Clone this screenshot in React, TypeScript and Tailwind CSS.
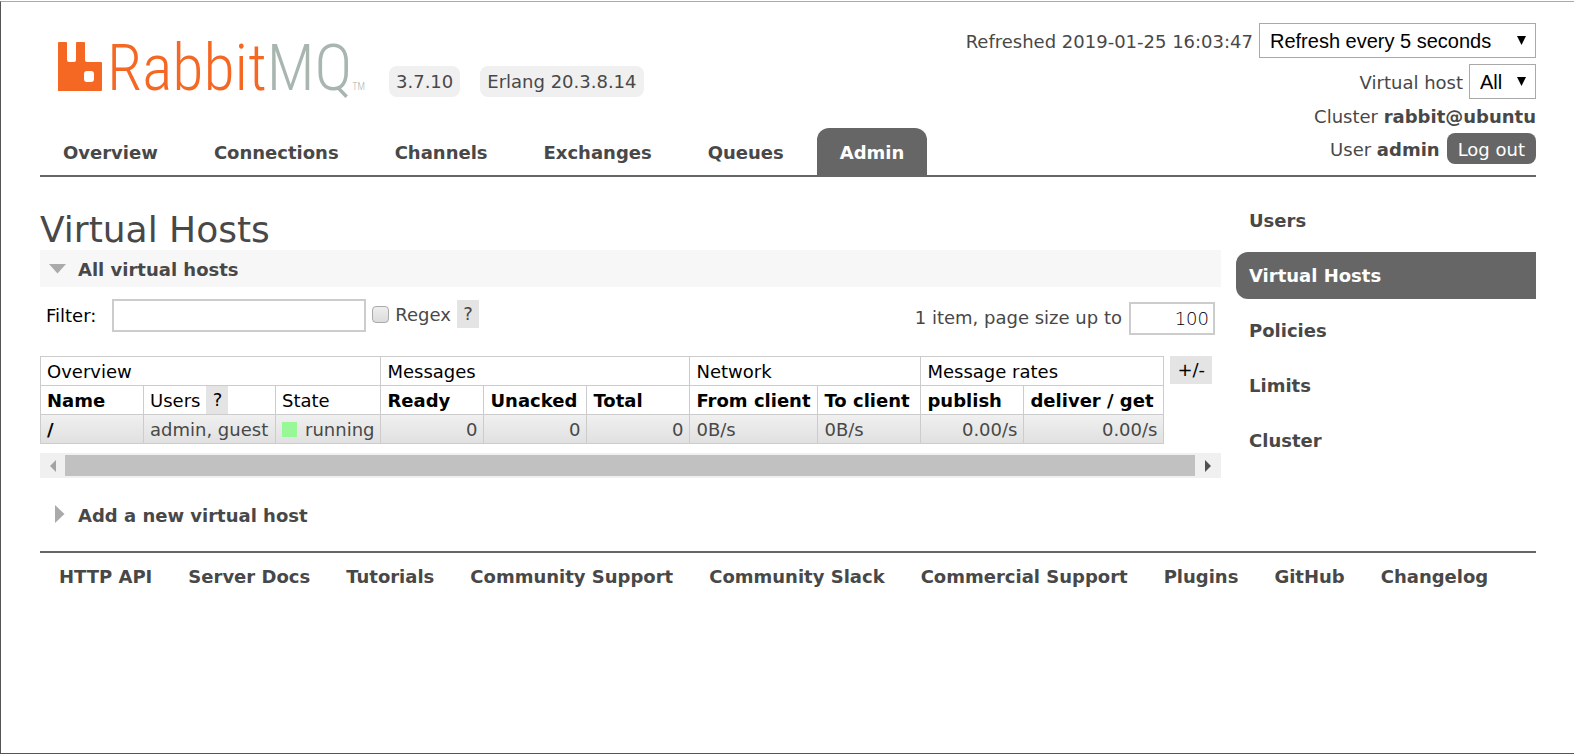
import React from "react";

const navItems = ["Overview", "Connections", "Channels", "Exchanges", "Queues", "Admin"];
const sideItems = ["Users", "Virtual Hosts", "Policies", "Limits", "Cluster"];
const footerLinks = [
  "HTTP API",
  "Server Docs",
  "Tutorials",
  "Community Support",
  "Community Slack",
  "Commercial Support",
  "Plugins",
  "GitHub",
  "Changelog",
];

function Logo() {
  return (
    <a href="#" aria-label="RabbitMQ" className="flex h-[58px] w-[305px] items-end">
      <svg width="45" height="50" viewBox="0 0 45 50" className="mb-[6px] shrink-0" aria-hidden="true">
        <path
          fill="#f56823"
          fillRule="evenodd"
          d="M1 1h7q1 0 1 1v17q0 2 2 2h5q2 0 2-2V2q0-1 1-1h7q1 0 1 1v17q0 2 2 2h14q1 0 1 1v27q0 1-1 1H0V2q0-1 1-1zM29 30q-3 0-3 3v5q0 3 3 3h4q3 0 3-3v-5q0-3-3-3z"
        />
      </svg>
      <span className="ml-[4px] font-['Roboto_Condensed',sans-serif] text-[64px] leading-[56px] font-light text-[#f56823]">
        Rabbit<span className="text-[#a9b6b0]">MQ</span>
      </span>
      <span className="pb-[3px] font-['Roboto_Condensed',sans-serif] text-[10px] leading-[14px] font-light text-[#a9b6b0]">
        TM
      </span>
    </a>
  );
}

function SelectBox({ id, label, value, className }: { id: string; label: React.ReactNode; value: string; className: string }) {
  return (
    <div className="flex items-center justify-end gap-[6px]">
      <label htmlFor={id} className="pt-[2px]">{label}</label>
      <span className={"relative flex " + className}>
        <select
          id={id}
          className="h-[35px] w-full appearance-none border border-[#a9a9a9] bg-white pl-[10px] font-['Liberation_Sans',Arial,sans-serif] text-[20px] text-black"
        >
          <option>{value}</option>
        </select>
        <svg width="9" height="9" viewBox="0 0 9 9" className="pointer-events-none absolute top-[13px] right-[10px]" aria-hidden="true">
          <path d="M0 0h9L4.500 9z" fill="#000" />
        </svg>
      </span>
    </div>
  );
}

function Help() {
  return (
    <button type="button" aria-label="Help" className="h-[28px] w-[22px] bg-[#e4e4e4] text-center">
      ?
    </button>
  );
}

const th = "border border-[#ccc] px-[6px] pt-px leading-[27px] text-left whitespace-nowrap";
const num = "border border-[#ccc] px-[6px] pt-px leading-[27px] text-right";

export default function App() {
  return (
    <div className="pt-px">
      <div className="min-h-[calc(100vh-1px)] border-t border-b border-l border-t-[#aaa] border-b-[#555] border-l-[#555] bg-white pr-[38px] pl-[39px] font-['DejaVu_Sans',Verdana,sans-serif] text-[18px] leading-[28px] text-[#484848]">
        <header className="flex justify-between border-b-2 border-[#666]">
          <div className="flex flex-col justify-between">
            <div className="flex items-end pt-[37px] pl-[18px]">
              <Logo />
              <div className="ml-[26px] flex gap-[20px]">
                <span className="rounded-[8px] bg-[#f0f0f0] px-[7px] pt-[2px] pb-px leading-[28px]">3.7.10</span>
                <span className="rounded-[8px] bg-[#f0f0f0] px-[7px] pt-[2px] pb-px leading-[28px]">Erlang 20.3.8.14</span>
              </div>
            </div>
            <nav className="flex gap-[10px] font-bold">
              {navItems.map((item) => (
                <a
                  key={item}
                  href="#"
                  className={
                    item === "Admin"
                      ? "rounded-t-[12px] bg-[#666] px-[23px] pt-[11px] pb-[8px] text-white"
                      : "px-[23px] pt-[11px] pb-[8px]"
                  }
                >
                  {item}
                </a>
              ))}
            </nav>
          </div>
          <div className="flex flex-col items-end pt-[21px] pb-[11px]">
            <SelectBox id="refresh" label="Refreshed 2019-01-25 16:03:47" value="Refresh every 5 seconds" className="w-[277px]" />
            <div className="pt-[6px]">
              <SelectBox id="vhost" label="Virtual host" value="All" className="w-[67px]" />
            </div>
            <p className="pt-[4px]">
              Cluster <b>rabbit@ubuntu</b>
            </p>
            <div className="flex items-center gap-[7px] pt-[2px]">
              <span className="pt-[2px]">
                User <b>admin</b>
              </span>
              <button type="button" className="h-[31px] rounded-[8px] bg-[#666] px-[11px] pt-[2px] text-white">
                Log out
              </button>
            </div>
          </div>
        </header>

        <div className="flex gap-[15px] border-b-2 border-[#666]">
          <main className="min-w-0 flex-1 pt-[32px]">
            <h1 className="text-[36px] leading-[41px]">Virtual Hosts</h1>
            <h2 className="bg-[#f7f7f7] font-bold">
              <button type="button" className="flex h-[37px] items-center pl-[9px] font-bold">
                <svg width="17" height="10" viewBox="0 0 17 10" aria-hidden="true">
                  <path d="M0 0h17L8.500 9.500z" fill="#aaa" />
                </svg>
                <span className="pt-[2px] pl-[12px]">All virtual hosts</span>
              </button>
            </h2>
            <div className="flex justify-between pr-[6px] pl-[6px]">
              <div className="flex items-start pt-[12px]">
                <label htmlFor="filter" className="pt-[3px] text-black">
                  Filter:
                </label>
                <input id="filter" type="text" className="ml-[16px] h-[33px] w-[254px] border-2 border-[#ccc] px-[5px]" />
                <input
                  id="regex"
                  type="checkbox"
                  className="mt-[7px] ml-[6px] size-[17px] appearance-none rounded-[4px] border border-[#aaa] bg-linear-to-b from-[#eee] to-[#dcdcdc]"
                />
                <label htmlFor="regex" className="pt-[2px] pr-[6px] pl-[6px]">
                  Regex
                </label>
                <div className="flex pt-px">
                  <Help />
                </div>
              </div>
              <div className="flex items-center gap-[7px] pt-[15px]">
                <label htmlFor="pagesize" className="pb-[2px]">1 item, page size up to</label>
                <input
                  id="pagesize"
                  type="text"
                  defaultValue="100"
                  className="h-[33px] w-[86px] border-2 border-[#ccc] px-[4px] text-right font-extralight text-black"
                />
              </div>
            </div>
            <div className="flex items-start gap-[6px] pt-[21px]">
              <table className="table-fixed border-collapse text-black">
                <colgroup>
                  <col className="w-[103px]" />
                  <col className="w-[132px]" />
                  <col className="w-[105px]" />
                  <col className="w-[103px]" />
                  <col className="w-[103px]" />
                  <col className="w-[103px]" />
                  <col className="w-[128px]" />
                  <col className="w-[103px]" />
                  <col className="w-[103px]" />
                  <col className="w-[140px]" />
                </colgroup>
                <thead>
                  <tr>
                    <th colSpan={3} className={th + " font-normal"}>Overview</th>
                    <th colSpan={3} className={th + " font-normal"}>Messages</th>
                    <th colSpan={2} className={th + " font-normal"}>Network</th>
                    <th colSpan={2} className={th + " font-normal"}>Message rates</th>
                  </tr>
                  <tr>
                    <th className={th}>Name</th>
                    <th className="border border-[#ccc] px-[6px] text-left font-normal">
                      <div className="flex gap-[6px]">
                        <span className="pt-px leading-[27px]">Users</span>
                        <Help />
                      </div>
                    </th>
                    <th className={th + " font-normal"}>State</th>
                    <th className={th}>Ready</th>
                    <th className={th}>Unacked</th>
                    <th className={th}>Total</th>
                    <th className={th}>From client</th>
                    <th className={th}>To client</th>
                    <th className={th}>publish</th>
                    <th className={th}>deliver / get</th>
                  </tr>
                </thead>
                <tbody>
                  <tr className="bg-linear-to-b from-[#f0f0f0] to-[#e0e0e0] text-[#484848]">
                    <td className={th + " font-bold text-black"}>
                      <a href="#">/</a>
                    </td>
                    <td className={th}>admin, guest</td>
                    <td className={th}>
                      <span className="flex items-center gap-[8px]">
                        <span className="size-[15px] bg-[#98f898]" />
                        running
                      </span>
                    </td>
                    <td className={num}>0</td>
                    <td className={num}>0</td>
                    <td className={num}>0</td>
                    <td className={th}>0B/s</td>
                    <td className={th}>0B/s</td>
                    <td className={num}>0.00/s</td>
                    <td className={num}>0.00/s</td>
                  </tr>
                </tbody>
              </table>
              <button type="button" className="h-[28px] bg-[#e4e4e4] px-[7px] text-black">
                +/-
              </button>
            </div>
            <div className="mt-[9px] flex h-[25px] items-center bg-[#f0f0f0]">
              <button type="button" aria-label="Scroll left" className="flex w-[25px] justify-center">
                <svg width="6" height="12" viewBox="0 0 6 12" aria-hidden="true">
                  <path d="M6 0v12L0 6z" fill="#a3a3a3" />
                </svg>
              </button>
              <div className="h-[21px] flex-1 bg-[#c1c1c1]" />
              <button type="button" aria-label="Scroll right" className="flex w-[26px] justify-center">
                <svg width="6" height="12" viewBox="0 0 6 12" aria-hidden="true">
                  <path d="M0 0v12l6-6z" fill="#505050" />
                </svg>
              </button>
            </div>
            <h2 className="pt-[19px] pb-[17px] font-bold">
              <button type="button" className="flex h-[37px] items-center pl-[15px] font-bold">
                <svg width="10" height="18" viewBox="0 0 10 18" className="mb-[4px]" aria-hidden="true">
                  <path d="M0 0v18l9.500-9z" fill="#aaa" />
                </svg>
                <span className="pl-[13px]">Add a new virtual host</span>
              </button>
            </h2>
          </main>
          <nav className="flex w-[300px] flex-col gap-[8px] pt-[20px] font-bold">
            {sideItems.map((item) => (
              <a
                key={item}
                href="#"
                className={
                  item === "Virtual Hosts"
                    ? "rounded-l-[12px] bg-[#666] py-[9px] pl-[13px] leading-[29px] text-white"
                    : "py-[9px] pl-[13px] leading-[29px]"
                }
              >
                {item}
              </a>
            ))}
          </nav>
        </div>

        <footer className="flex flex-wrap gap-x-[36px] pt-[10px] pl-[19px] font-bold">
          {footerLinks.map((item) => (
            <a key={item} href="#">
              {item}
            </a>
          ))}
        </footer>
      </div>
    </div>
  );
}
